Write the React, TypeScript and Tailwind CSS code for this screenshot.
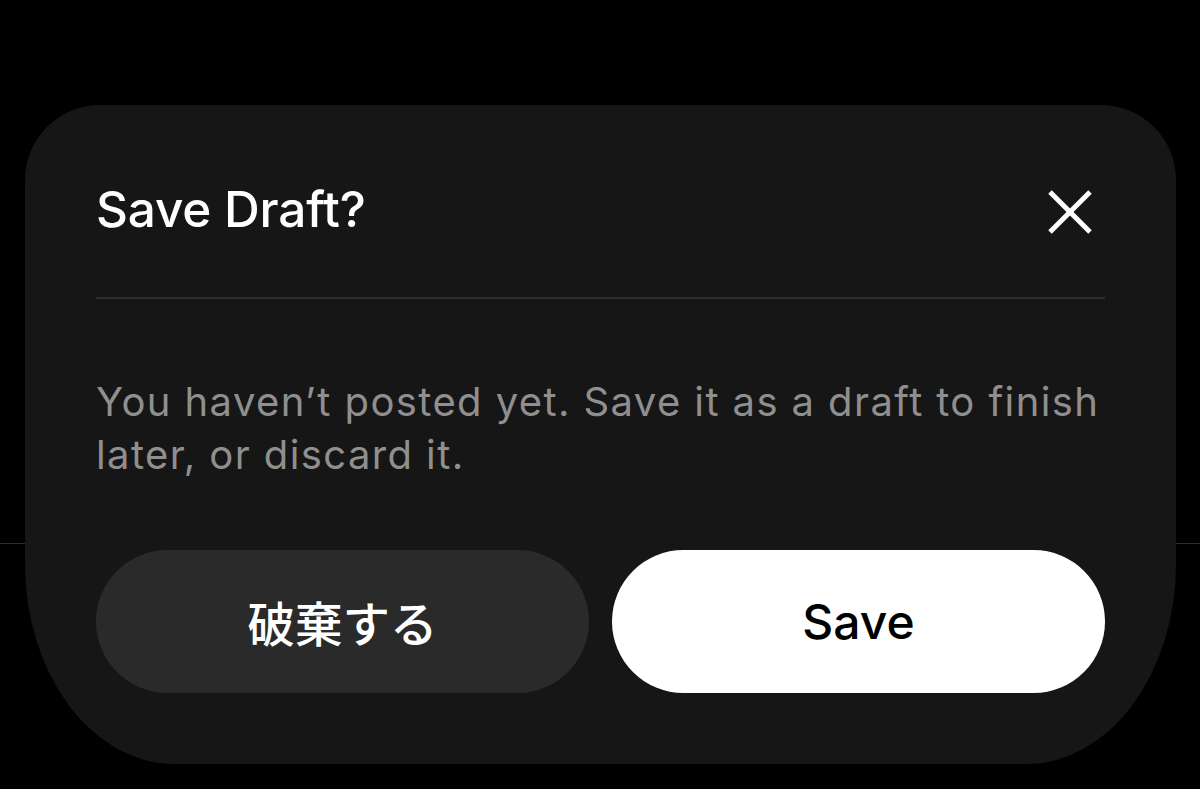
import React from "react";

export default function App() {
  return (
    <div className="relative w-[1200px] h-[789px] bg-black overflow-hidden" style={{ fontFamily: "Inter, 'Noto Sans CJK JP', sans-serif" }}>
      <div className="h-[544px] border-b border-[#2e2e2e]" />
      <div className="absolute left-[25px] top-[105px] w-[1151px] h-[659px] bg-[#161616] rounded-t-[75px] rounded-bl-[150px_200px] rounded-br-[150px_200px] px-[71px] pt-[74px] flex flex-col">
        <div className="flex items-center justify-between h-[60px]">
          <h1 className="text-[49.5px] leading-[60px] font-medium text-white tracking-[-0.2px]">Save Draft?</h1>
          <svg width="46" height="46" viewBox="0 0 46 46" className="mr-[12px] mt-[6px]" aria-label="Close">
            <line x1="3" y1="3" x2="43" y2="43" stroke="white" strokeWidth="5" />
            <line x1="43" y1="3" x2="3" y2="43" stroke="white" strokeWidth="5" />
          </svg>
        </div>
        <div className="mt-[58px] h-[2px] bg-[#2e2e2e]" />
        <p className="mt-[76px] text-[40px] leading-[53px] tracking-[1.4px] text-[#8f8f8f]">
          You haven’t posted yet. Save it as a draft to finish later, or discard it.
        </p>
        <div className="mt-[69px] flex gap-[23px]">
          <button className="flex-1 h-[143px] rounded-full bg-[#2a2a2a] text-white text-[47.5px] font-medium flex items-center justify-center" style={{ fontFamily: "'Noto Sans CJK JP', sans-serif" }}>
            破棄する
          </button>
          <button className="flex-1 h-[143px] rounded-full bg-white text-black text-[48px] font-medium flex items-center justify-center">
            Save
          </button>
        </div>
      </div>
    </div>
  );
}
